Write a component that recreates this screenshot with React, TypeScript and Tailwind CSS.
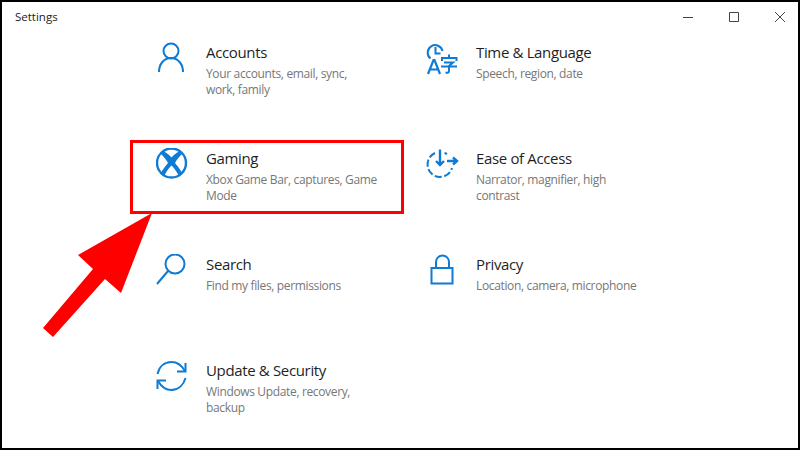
const items = [
  { title: "Accounts", sub: ["Your accounts, email, sync,", "work, family"], icon: <AccountIcon /> },
  { title: "Time & Language", sub: ["Speech, region, date"], icon: <TimeIcon /> },
  { title: "Gaming", sub: ["Xbox Game Bar, captures, Game", "Mode"], icon: <XboxIcon /> },
  { title: "Ease of Access", sub: ["Narrator, magnifier, high", "contrast"], icon: <EaseIcon /> },
  { title: "Search", sub: ["Find my files, permissions"], icon: <SearchIcon /> },
  { title: "Privacy", sub: ["Location, camera, microphone"], icon: <LockIcon /> },
  { title: "Update & Security", sub: ["Windows Update, recovery,", "backup"], icon: <UpdateIcon /> },
];

function Svg({ children }: { children: React.ReactNode }) {
  return (
    <svg width="34" height="34" viewBox="0 0 34 34" fill="none" stroke="#0f7bd4" strokeWidth="2">
      {children}
    </svg>
  );
}

function AccountIcon() {
  return (
    <Svg>
      <circle cx="15" cy="9" r="7.5" />
      <path d="M3 30c0-8 5-14 12-14s12 6 12 14" />
    </Svg>
  );
}

function TimeIcon() {
  return (
    <Svg>
      <path d="M4.500 16.500A7.500 7.500 0 1 1 16.500 9" />
      <path d="M9.500 5v6.500h5" />
      <path d="m2 32 5.500-14h1L14 32M4 27.500h8" strokeWidth="2.200" />
      <path d="M23 12.500v3M16 19v-3h14.500v3M18 20.500h9l-4 3.500v5c0 1.500-1 2-3.500 1.500M15 24.500h16" />
    </Svg>
  );
}

function XboxIcon() {
  return (
    <Svg>
      <circle cx="15.500" cy="15" r="14.500" strokeWidth="2.400" />
      <path
        d="M5 6 8 3.500C11 5 13.500 7 15.500 9.500 17.500 7 20 5 23 3.500L26 6C23 9 20.500 12 19 15 22 18.500 25 22.500 26.500 26L23 28.500C21 24 18.500 20.500 15.500 17.500 12.500 20.500 10 24 8 28.500L4.500 26C6 22.500 9 18.500 12 15 10.500 12 8 9 5 6Z"
        fill="#0f7bd4"
        stroke="none"
      />
    </Svg>
  );
}

function EaseIcon() {
  return (
    <Svg>
      <path d="M9 5A12.500 12.500 0 1 0 26 20" strokeDasharray="7 2.500" />
      <path d="M18.500 4.800 21 6" />
      <path d="M14 1.500V17M10 13l4 4 4-4" strokeWidth="2.400" />
      <path d="M21 13h10M27 9.500l4 3.500-4 3.500" strokeWidth="2.400" />
    </Svg>
  );
}

function SearchIcon() {
  return (
    <Svg>
      <circle cx="19" cy="10" r="9.500" />
      <path d="M12 17 1 30" />
    </Svg>
  );
}

function LockIcon() {
  return (
    <Svg>
      <path d="M5.500 14h21v15.500h-21zM10 14V8a6.500 6.500 0 0 1 13 0v6" />
    </Svg>
  );
}

function UpdateIcon() {
  return (
    <Svg>
      <path d="M1.500 14C3 7 8 2 15.500 2c5 0 10 3 13.500 9M29.500 18c-2 7-7 12-14 12-5 0-10-3-13.500-9" />
      <path d="M29.500 3v8.500H21M1.500 29v-8.500H10" />
    </Svg>
  );
}

export default function App() {
  return (
    <div className="relative w-[800px] h-[450px] bg-white border-2 border-black overflow-hidden font-['Open_Sans',sans-serif]">
      <div className="flex items-center justify-between h-[30px] pl-[13px]">
        <span className="text-[11.5px] text-[#222]">Settings</span>
        <div className="flex items-center gap-[32px] pr-[11px] text-[#444]">
          <svg width="14" height="14" viewBox="0 0 14 14" stroke="currentColor" strokeWidth="1"><path d="M2 7.500h10" /></svg>
          <svg width="14" height="14" viewBox="0 0 14 14" fill="none" stroke="currentColor" strokeWidth="1"><path d="M2.500 2.500h9v9h-9z" /></svg>
          <svg width="14" height="14" viewBox="0 0 14 14" stroke="currentColor" strokeWidth="1"><path d="m2 2 10 10M12 2 2 12" /></svg>
        </div>
      </div>
      <div className="grid grid-cols-[270px_270px] auto-rows-[106px] pl-[154px] pt-[8px]">
        {items.map((item) => (
          <div key={item.title} className="flex">
            <div className="w-[50px] pt-[2px] shrink-0">{item.icon}</div>
            <div>
              <div className="text-[15px] leading-[24px] tracking-[-0.35px] text-[#1f1f1f]">{item.title}</div>
              <div className="mt-[2px] text-[12px] leading-[16px] tracking-[-0.35px] text-[#777]">
                {item.sub.map((line) => (
                  <div key={line}>{line}</div>
                ))}
              </div>
            </div>
          </div>
        ))}
      </div>
      <div className="absolute left-[128px] top-[138px] w-[274px] h-[74px] border-[3px] border-[#f00]" />
      <svg className="absolute left-[38px] top-[209px]" width="116" height="130" viewBox="0 0 116 130">
        <path d="M112 2 38 44 53 58 3 117 13 126 65 68 81 82Z" fill="#f00" />
      </svg>
    </div>
  );
}
